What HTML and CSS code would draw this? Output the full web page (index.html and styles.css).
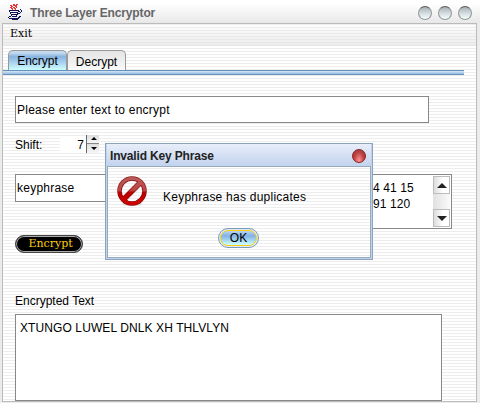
FILE: index.html
```html
<!DOCTYPE html>
<html lang="en">
<head>
<meta charset="utf-8">
<title>Three Layer Encryptor</title>
<link rel="stylesheet" href="styles.css">
</head>
<body>
<div class="window">
  <header class="titlebar">
    <svg class="java" width="16" height="18" viewBox="0 0 16 18" shape-rendering="crispEdges" fill="none">
      <path d="M5 .5h2M8 .5h2M2 1.500h2M5 1.500h4M3 2.500h2M7 2.500h2M2 3.500h2M5 3.500h2M8 3.500h1M3 4.500h2M6 4.500h2M4 5.500h1M7 5.500h1" stroke="#e33"/>
      <path d="M1 6.500h10M12 5.500h1M13 6.500h1M1 7.500h1M10 7.500h2M13 7.500h1M2 8.500h8M12 8.500h1M2 9.500h1M9 9.500h3M3 10.500h7M3 11.500h1M8 11.500h1M1 12.500h2M4 12.500h5M11 12.500h2M0 13.500h1M10 13.500h2M1 14.500h10M4 15.500h6" stroke="#115"/>
    </svg>
    <h1>Three Layer Encryptor</h1>
    <div class="controls"><i></i><i></i><i></i></div>
  </header>
  <div class="frame">
    <nav class="menubar">Exit</nav>
    <div class="tabs"><span class="tab active">Encrypt</span><span class="tab">Decrypt</span></div>
    <div class="rule"></div>
    <main>
      <div class="field message">Please enter text to encrypt</div>
      <div class="shift"><label>Shift:</label><span class="value">7</span>
        <span class="spinner"><svg width="12" height="18" viewBox="0 0 12 18"><path d="M0 8.5h12" stroke="#888"/><path d="M4 5h6L7 2zM4 12h6L7 15z"/></svg></span></div>
      <div class="keys">
        <div class="field keyphrase">keyphrase</div>
        <div class="cipher"><p>4 41 15<br>91 120</p>
          <div class="scroll"><b><svg width="15" height="16"><path d="M3 11h10L8 6z" fill="#222"/></svg></b><b><svg width="15" height="16"><path d="M3 6h10l-5 5z" fill="#222"/></svg></b></div></div>
      </div>
      <button class="encrypt">Encrypt</button>
      <div class="caption">Encrypted Text</div>
      <div class="output">XTUNGO LUWEL DNLK XH THLVLYN</div>
    </main>
  </div>
</div>
<section class="dialog">
  <div class="dialog-title"><h2>Invalid Key Phrase</h2><i class="close"></i></div>
  <div class="dialog-body">
    <div class="notice">
      <svg width="32" height="32" viewBox="0 0 32 32">
        <defs><linearGradient id="red" x1="0" y1="0" x2="0" y2="32" gradientUnits="userSpaceOnUse"><stop stop-color="#b96060"/><stop offset=".48" stop-color="#bd4444"/><stop offset=".55" stop-color="#b90000"/><stop offset="1" stop-color="#d00"/></linearGradient></defs>
        <ellipse cx="16" cy="29" rx="10" ry="2" fill="#ddd"/>
        <circle cx="16" cy="16" r="12.500" fill="none" stroke="#811" stroke-width="4.500"/>
        <path d="M8 24L24 8" stroke="#811" stroke-width="5.500"/>
        <circle cx="16" cy="16" r="12.500" fill="none" stroke="url(#red)" stroke-width="3.200"/>
        <path d="M8 24L24 8" stroke="url(#red)" stroke-width="4.200"/>
      </svg>
      <p>Keyphrase has duplicates</p>
    </div>
    <button class="ok"><span>OK</span></button>
  </div>
</section>
</body>
</html>
```

FILE: styles.css
```css
* { box-sizing: border-box; }
body { margin: 0; width: 480px; height: 403px; overflow: hidden; position: relative; background: #ebebeb; font: 12px/14px "Liberation Sans", Arial, sans-serif; color: #000; }
h1, h2, p { margin: 0; }
.window { height: 403px; padding: 0 3px 1px 2px; display: flex; flex-direction: column; }
.titlebar { height: 23px; margin: 0 -3px 0 -2px; padding: 4px 8px 0 8px; display: flex; align-items: flex-start; background: linear-gradient(#fff 15%, #e8e8e8); }
.titlebar h1 { margin-left: 6px; margin-top: 2px; font-size: 12px; line-height: 14px; letter-spacing: -.14px; color: #666; }
.controls { margin: 2px 0 0 auto; display: flex; gap: 6px; }
.controls i { width: 14px; height: 14px; border-radius: 50%; border: 1px solid #929698; border-top-color: #5c5c5c; background: linear-gradient(#a6b0b5, #d2dadd 50%, #f5ffff); }
.frame { flex: 1; border: 1px solid #bbb; background: repeating-linear-gradient(#ededed 0 1px, #fff 1px 3px); }
.menubar { height: 22px; padding: 3px 7px; font: 11px/14px "DejaVu Serif", serif; background: linear-gradient(rgba(240,240,240,.1), rgba(224,224,224,.6)); }
.tabs { display: flex; align-items: flex-end; height: 24px; padding-left: 5px; }
.tab { width: 59px; height: 20px; padding-top: 4px; text-align: center; border: 1px solid #999; border-bottom: 0; border-radius: 5px 5px 0 0; background: linear-gradient(#e5e5e5, #eee 50%, #fafafa); }
.tab.active { padding-top: 3px; background: linear-gradient(#c5daef 10%, #87b3e0 30%, #a9d1ef 60%, #cff); }
.rule { width: 461px; height: 5px; border-top: 1px solid #6791bd; border-bottom: 1px solid #6791bd; background: linear-gradient(#d5e6f5, #94bce0); }
main { padding: 21px 0 0 12px; }
.field { background: #fff; border: 1px solid #888; display: flex; align-items: center; padding-left: 1px; letter-spacing: .24px; }
.message { width: 414px; height: 27px; }
.shift { display: flex; height: 18px; margin-top: 12px; align-items: center; }
.shift label { width: 45px; padding-top: 1px; }
.value { width: 26px; height: 15px; padding-top: 1px; background: #fff; text-align: right; padding-right: 2px; }
.spinner { width: 13px; height: 18px; border-left: 1px solid #666; background: linear-gradient(#ddd, #f6f6f6 45%, #ddd 50%, #f6f6f6); }
.spinner svg, .scroll svg { display: block; }
.keys { display: flex; margin-top: 21px; }
.keyphrase { width: 290px; height: 28px; }
.cipher { width: 107px; height: 55px; margin-left: 40px; background: #fff; border: 1px solid #888; display: flex; justify-content: space-between; padding: 1px; }
.cipher p { padding: 4px 0 0 26px; line-height: 16px; letter-spacing: .1px; white-space: nowrap; }
.scroll { width: 17px; display: flex; flex-direction: column; justify-content: space-between; background: linear-gradient(90deg, #e1e1e1, #fafafa); }
.scroll b { height: 18px; border: 1px solid #bbb; background: linear-gradient(90deg, #ddd, #fff 60%); }
.encrypt { display: block; width: 68px; height: 18px; margin-top: 6px; padding: 0 0 0 3px; border: 1px solid #444; border-radius: 9px; background: #000; box-shadow: inset 0 0 0 1px #aaa; color: #fc1; font: 11px/14px "DejaVu Serif", serif; }
.caption { margin-top: 41px; }
.output { width: 427px; height: 87px; margin-top: 6px; padding: 6px 4px; letter-spacing: .1px; background: #fff; border: 1px solid #888; }
.dialog { position: absolute; left: 105px; top: 143px; width: 268px; height: 117px; border: 1px solid #8ba3bd; background: #c0d3ec; padding: 0 1px 1px; display: flex; flex-direction: column; }
.dialog-title { height: 22px; padding: 2px 5px 0 3px; display: flex; align-items: center; justify-content: space-between; background: linear-gradient(#e8eefa, #c2d3ee); }
.dialog h2 { font-size: 12px; line-height: 14px; letter-spacing: -.17px; color: #222; }
.close { width: 14px; height: 14px; border-radius: 50%; border: 1px solid #822; background: radial-gradient(ellipse at 50% 90%, #f99, transparent 60%), linear-gradient(#a44, #c33); }
.dialog-body { flex: 1; border: 1px solid #99aabd; background: repeating-linear-gradient(#fff 0 1px, #ededed 1px 2px, #fff 2px 3px); }
.notice { display: flex; padding: 8px 0 0 8px; }
.notice p { margin: 15px 0 0 15px; letter-spacing: .24px; }
.ok { display: block; margin: 21px 0 0 110px; width: 41px; height: 20px; padding: 1px; border: 1px solid #7a9ab8; border-radius: 10px; background: #ddecf5; font: 12px/15px "Liberation Sans", sans-serif; color: #000; }
.ok span { display: block; height: 16px; border: 1px solid #fc1; border-radius: 8px; background: linear-gradient(#b8d6f5, #82b1e3 35%, #cff); }
```
